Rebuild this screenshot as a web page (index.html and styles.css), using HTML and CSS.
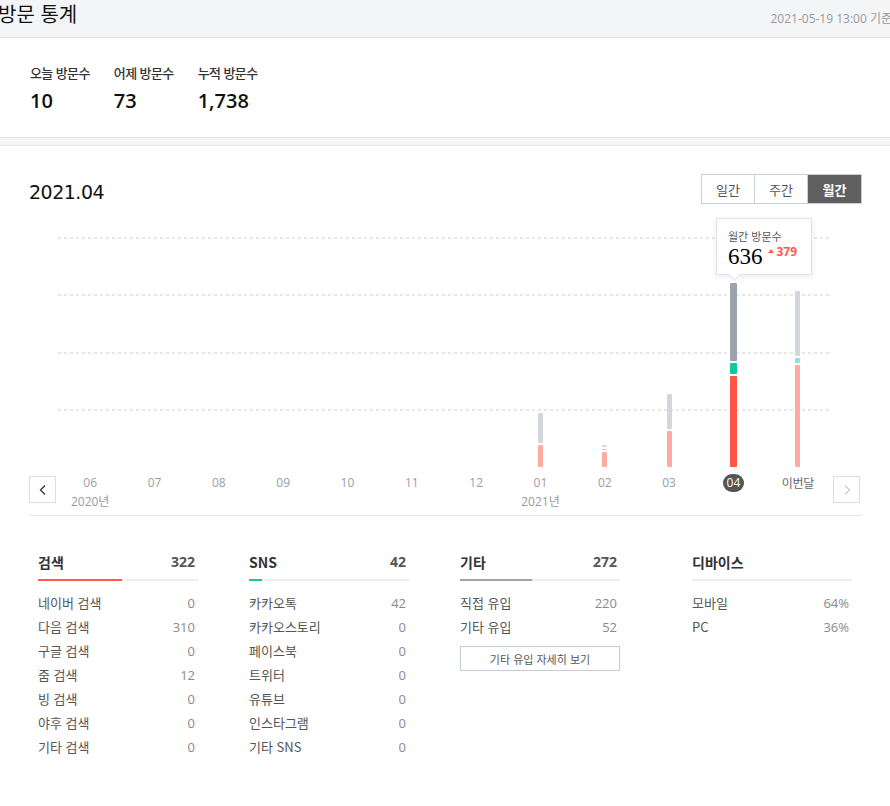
FILE: index.html
```html
<!DOCTYPE html>
<html lang="ko">
<head>
<meta charset="utf-8">
<title>방문 통계</title>
<link rel="stylesheet" href="styles.css">
</head>
<body>
<header class="page-head">
  <h1 class="page-title">방문 통계</h1>
  <span class="page-date">2021-05-19 13:00 기준</span>
</header>

<section class="summary">
  <div class="sum-item"><div class="sum-label">오늘 방문수</div><div class="sum-value">10</div></div>
  <div class="sum-item"><div class="sum-label">어제 방문수</div><div class="sum-value">73</div></div>
  <div class="sum-item"><div class="sum-label">누적 방문수</div><div class="sum-value">1,738</div></div>
</section>

<div class="divider"></div>

<section class="chart-section">
  <div class="chart-head">
    <h2 class="period">2021.04</h2>
    <div class="tabs">
      <button class="tab">일간</button>
      <button class="tab">주간</button>
      <button class="tab active">월간</button>
    </div>
  </div>

  <div class="chart-body">
    <button class="nav prev" aria-label="이전">
      <svg width="10" height="12" viewBox="0 0 10 12"><path d="M7 1.5 L2.5 6 L7 10.5" fill="none" stroke="#333" stroke-width="1.3"/></svg>
    </button>
    <div class="months">
      <div class="tooltip">
        <div class="tip-label">월간 방문수</div>
        <div class="tip-row"><span class="tip-value">636</span><span class="tip-diff"><i class="tri"></i>379</span></div>
      </div>
      <div class="month"><div class="plot"></div><div class="mlabel">06</div><div class="year">2020년</div></div>
      <div class="month"><div class="plot"></div><div class="mlabel">07</div><div class="year"></div></div>
      <div class="month"><div class="plot"></div><div class="mlabel">08</div><div class="year"></div></div>
      <div class="month"><div class="plot"></div><div class="mlabel">09</div><div class="year"></div></div>
      <div class="month"><div class="plot"></div><div class="mlabel">10</div><div class="year"></div></div>
      <div class="month"><div class="plot"></div><div class="mlabel">11</div><div class="year"></div></div>
      <div class="month"><div class="plot"></div><div class="mlabel">12</div><div class="year"></div></div>
      <div class="month">
        <div class="plot"><div class="bar">
          <span class="seg gray" style="height:30px"></span>
          <span class="seg red" style="height:22px"></span>
        </div></div>
        <div class="mlabel">01</div><div class="year">2021년</div>
      </div>
      <div class="month">
        <div class="plot"><div class="bar">
          <span class="seg gray" style="height:2px"></span>
          <span class="seg teal" style="height:1px"></span>
          <span class="seg red" style="height:15px"></span>
        </div></div>
        <div class="mlabel">02</div><div class="year"></div>
      </div>
      <div class="month">
        <div class="plot"><div class="bar">
          <span class="seg gray" style="height:35px"></span>
          <span class="seg red" style="height:36px"></span>
        </div></div>
        <div class="mlabel">03</div><div class="year"></div>
      </div>
      <div class="month current">
        <div class="plot"><div class="bar wide">
          <span class="seg gray" style="height:78px"></span>
          <span class="seg teal" style="height:11px"></span>
          <span class="seg red" style="height:91px"></span>
        </div></div>
        <div class="mlabel"><span class="pill">04</span></div><div class="year"></div>
      </div>
      <div class="month">
        <div class="plot"><div class="bar">
          <span class="seg gray" style="height:65px"></span>
          <span class="seg teal" style="height:5px"></span>
          <span class="seg red" style="height:102px"></span>
        </div></div>
        <div class="mlabel now">이번달</div><div class="year"></div>
      </div>
    </div>
    <button class="nav next" aria-label="다음">
      <svg width="10" height="12" viewBox="0 0 10 12"><path d="M3 1.5 L7.5 6 L3 10.5" fill="none" stroke="#ccc" stroke-width="1.2"/></svg>
    </button>
  </div>

  <div class="breakdown">
    <div class="col">
      <div class="col-head"><span class="col-title">검색</span><span class="col-total">322</span></div>
      <div class="meter"><span class="fill red" style="width:52.5%"></span></div>
      <ul class="rows">
        <li><span>네이버 검색</span><span class="num">0</span></li>
        <li><span>다음 검색</span><span class="num">310</span></li>
        <li><span>구글 검색</span><span class="num">0</span></li>
        <li><span>줌 검색</span><span class="num">12</span></li>
        <li><span>빙 검색</span><span class="num">0</span></li>
        <li><span>야후 검색</span><span class="num">0</span></li>
        <li><span>기타 검색</span><span class="num">0</span></li>
      </ul>
    </div>
    <div class="col">
      <div class="col-head"><span class="col-title">SNS</span><span class="col-total">42</span></div>
      <div class="meter"><span class="fill teal" style="width:8%"></span></div>
      <ul class="rows">
        <li><span>카카오톡</span><span class="num">42</span></li>
        <li><span>카카오스토리</span><span class="num">0</span></li>
        <li><span>페이스북</span><span class="num">0</span></li>
        <li><span>트위터</span><span class="num">0</span></li>
        <li><span>유튜브</span><span class="num">0</span></li>
        <li><span>인스타그램</span><span class="num">0</span></li>
        <li><span>기타 SNS</span><span class="num">0</span></li>
      </ul>
    </div>
    <div class="col">
      <div class="col-head"><span class="col-title">기타</span><span class="col-total">272</span></div>
      <div class="meter"><span class="fill gray" style="width:45%"></span></div>
      <ul class="rows">
        <li><span>직접 유입</span><span class="num">220</span></li>
        <li><span>기타 유입</span><span class="num">52</span></li>
      </ul>
      <button class="more">기타 유입 자세히 보기</button>
    </div>
    <div class="col device">
      <div class="col-head"><span class="col-title">디바이스</span></div>
      <div class="meter"></div>
      <ul class="rows">
        <li><span>모바일</span><span class="num">64%</span></li>
        <li><span>PC</span><span class="num">36%</span></li>
      </ul>
    </div>
  </div>
</section>
</body>
</html>
```

FILE: styles.css
```css
* { box-sizing: border-box; }

html, body {
  margin: 0;
  padding: 0;
  background: #fff;
  font-family: "Open Sans", "Noto Sans CJK KR", sans-serif;
  color: #222;
}

button { font-family: inherit; cursor: pointer; }

.page-head {
  height: 38px;
  background: #f4f5f7;
  border-bottom: 1px solid #e3e5ea;
  display: flex;
  justify-content: space-between;
  align-items: flex-start;
  overflow: hidden;
}

.page-title {
  margin: 0 0 0 -2px;
  font-size: 20px;
  font-weight: 400;
  line-height: 28px;
  color: #111;
  font-family: "Noto Sans CJK KR", sans-serif;
}

.page-date {
  margin-top: 10px;
  margin-right: -2px;
  font-size: 12px;
  line-height: 18px;
  color: #999;
  white-space: nowrap;
}

.summary {
  height: 99px;
  display: flex;
  gap: 24px;
  padding: 25px 0 0 30px;
}

.sum-label {
  font-size: 13px;
  line-height: 20px;
  color: #333;
  font-weight: 500;
  letter-spacing: -0.6px;
  font-family: "Noto Sans CJK KR", sans-serif;
}

.sum-value {
  margin-top: 4px;
  font-size: 20px;
  line-height: 28px;
  font-weight: 600;
  color: #111;
}

.divider {
  height: 9px;
  background: #f4f5f7;
  border-top: 1px solid #e3e5ea;
  border-bottom: 1px solid #e3e5ea;
}

.chart-section {
  padding: 0 28px 40px 29px;
}

.chart-head {
  display: flex;
  justify-content: space-between;
  align-items: center;
  padding-top: 28px;
  height: 58px;
}

.period {
  margin: 6px 0 0 0;
  font-size: 19px;
  font-weight: 400;
  color: #111;
  font-family: "DejaVu Sans", sans-serif;
  letter-spacing: -0.5px;
}

.tabs {
  display: flex;
  border: 1px solid #c8cfdb;
}

.tab {
  width: 53px;
  height: 28px;
  border: 0;
  border-left: 1px solid #c8cfdb;
  background: #fff;
  color: #555;
  font-size: 13px;
  font-family: "Noto Sans CJK KR", sans-serif;
  padding: 0;
}

.tab:first-child { border-left: 0; width: 52px; }

.tab.active {
  background: #5f5f5f;
  color: #fff;
  font-weight: 700;
  width: 54px;
}

.chart-body {
  margin-top: 14px;
  display: flex;
  align-items: flex-end;
  border-bottom: 1px solid #e4e4e4;
  width: 833px;
}

.nav {
  width: 27px;
  height: 27px;
  border: 1px solid #dcdde6;
  background: #fff;
  display: flex;
  align-items: center;
  justify-content: center;
  padding: 0;
  margin-bottom: 12px;
  flex: none;
}

.nav.next { margin-left: 3px; }

.months {
  position: relative;
  margin-left: 2px;
  width: 772px;
  display: flex;
  background-image:
    linear-gradient(to right, #e6e6e6 50%, transparent 50%),
    linear-gradient(to right, #e6e6e6 50%, transparent 50%),
    linear-gradient(to right, #e6e6e6 50%, transparent 50%),
    linear-gradient(to right, #e6e6e6 50%, transparent 50%);
  background-size: 6px 2px;
  background-repeat: repeat-x;
  background-position: 0 19px, 0 76px, 0 134px, 0 191px;
}

.month {
  flex: 1;
  display: flex;
  flex-direction: column;
  align-items: center;
}

.plot {
  height: 249px;
  width: 100%;
  display: flex;
  justify-content: center;
  align-items: flex-end;
}

.bar {
  width: 5px;
  display: flex;
  flex-direction: column;
  gap: 2px;
}

.bar.wide { width: 7px; }

.seg { display: block; border-radius: 1px; }
.seg.gray { background: #d3d7db; }
.seg.teal { background: #8fe3d3; }
.seg.red { background: #ffaaa2; }

.current .seg.gray { background: #9ba4ad; }
.current .seg.teal { background: #16c4a6; }
.current .seg.red { background: #ff5547; }

.mlabel {
  margin-top: 7px;
  height: 18px;
  font-size: 12px;
  line-height: 18px;
  color: #9a9ea5;
}

.mlabel.now { color: #666; font-family: "Noto Sans CJK KR", sans-serif; letter-spacing: -0.3px; }

.pill {
  display: inline-block;
  width: 21px;
  height: 18px;
  border-radius: 9px;
  background: #555;
  color: #fff;
  text-align: center;
}

.year {
  height: 23px;
  padding-top: 1px;
  font-size: 12px;
  line-height: 18px;
  color: #9a9a9a;
}

.tooltip {
  position: absolute;
  left: 658px;
  top: 0;
  width: 96px;
  height: 57px;
  background: #fff;
  border: 1px solid #dfe3ec;
  box-shadow: 0 2px 6px rgba(0, 0, 0, 0.08);
  padding: 9px 0 0 11px;
  z-index: 2;
}

.tooltip::after {
  content: "";
  position: absolute;
  left: 13px;
  bottom: -5px;
  width: 8px;
  height: 8px;
  background: #fff;
  border-right: 1px solid #dfe3ec;
  border-bottom: 1px solid #dfe3ec;
  transform: rotate(45deg);
}

.tip-label {
  font-size: 11px;
  line-height: 16px;
  color: #555;
  font-family: "Noto Sans CJK KR", sans-serif;
}

.tip-row { display: flex; align-items: flex-start; gap: 5px; }

.tip-value {
  font-family: "Liberation Serif", serif;
  font-size: 23px;
  line-height: 25px;
  color: #000;
}

.tip-diff {
  display: flex;
  align-items: center;
  gap: 3px;
  font-size: 12px;
  font-weight: 700;
  color: #ff5a4a;
  line-height: 16px;
  margin-top: 0;
}

.tri {
  display: block;
  width: 0;
  height: 0;
  border-left: 3px solid transparent;
  border-right: 3px solid transparent;
  border-bottom: 4px solid #ff5a4a;
  margin-top: -3px;
}

.breakdown {
  display: flex;
  padding: 36px 0 0 9px;
}

.col {
  width: 160px;
  margin-right: 51px;
}

.col.device { margin-left: 21px; margin-right: 0; }

.col-head {
  display: flex;
  justify-content: space-between;
  height: 20px;
  line-height: 20px;
  padding-right: 3px;
  font-family: "Noto Sans CJK KR", sans-serif;
}

.col-title { font-size: 14px; font-weight: 700; color: #333; }
.col-total { font-size: 14px; font-weight: 700; color: #555; font-family: "Open Sans", sans-serif; }

.meter {
  margin-top: 7px;
  height: 2px;
  background: #eeeeee;
}

.fill { display: block; height: 2px; }
.fill.red { background: #ff5a4a; }
.fill.teal { background: #1ec5a4; }
.fill.gray { background: #9ba4ad; }

.rows {
  list-style: none;
  margin: 10px 0 0 0;
  padding: 0 3px 0 0;
}

.rows li {
  display: flex;
  justify-content: space-between;
  height: 24px;
  line-height: 24px;
  font-size: 13px;
  color: #555;
  font-family: "Noto Sans CJK KR", sans-serif;
}

.rows .num {
  color: #8a8a8a;
  font-family: "Open Sans", sans-serif;
}

.more {
  margin-top: 7px;
  width: 160px;
  height: 25px;
  border: 1px solid #c5ccd8;
  background: #fff;
  font-size: 11px;
  color: #555;
  font-family: "Noto Sans CJK KR", sans-serif;
  padding: 0;
}
```
